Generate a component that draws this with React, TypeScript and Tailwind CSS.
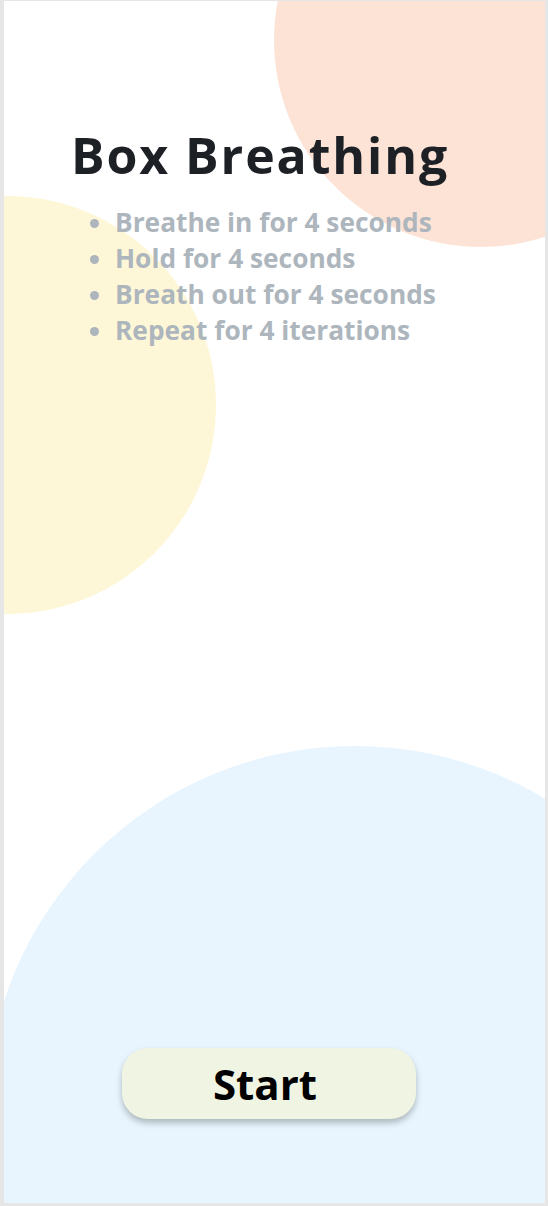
import React from "react";

const steps = [
  "Breathe in for 4 seconds",
  "Hold for 4 seconds",
  "Breath out for 4 seconds",
  "Repeat for 4 iterations",
];

export default function App() {
  return (
    <div className="w-[548px] h-[1206px] bg-[#e6e6e6] pl-[4px] pt-[1px] pr-[3px] pb-[3px]">
      <div
        className="relative h-full w-full overflow-hidden bg-white flex flex-col"
        style={{ fontFamily: "'Open Sans', 'Noto Sans', sans-serif" }}
      >
        {/* background blobs */}
        <div className="absolute left-[270px] top-[-168px] w-[414px] h-[414px] rounded-full bg-[#fce3d6]" />
        <div className="absolute left-[-206px] top-[195px] w-[418px] h-[418px] rounded-full bg-[#fef7d7]" />
        <div className="absolute left-[-18px] top-[745px] w-[738px] h-[738px] rounded-full bg-[#e8f5fe]" />

        <div className="relative flex flex-col flex-1 pl-[67px] pt-[121px] pb-[84px]">
          <h1 className="text-[50px] leading-[66px] tracking-[1.9px] font-bold text-[#1d2025]">Box Breathing</h1>
          <ul className="mt-[16px] pl-[44px] list-disc marker:text-[#adb5bd] text-[26.3px] leading-[36px] font-bold text-[#adb5bd]">
            {steps.map((s) => (
              <li key={s}>{s}</li>
            ))}
          </ul>

          <div className="mt-auto flex pl-[51px]">
            <button className="w-[294px] h-[71px] pr-[8px] rounded-[26px] bg-[#eff5e2] text-[42px] font-bold text-black shadow-[0_4px_6px_rgba(0,0,0,0.25)]">
              Start
            </button>
          </div>
        </div>
      </div>
    </div>
  );
}
